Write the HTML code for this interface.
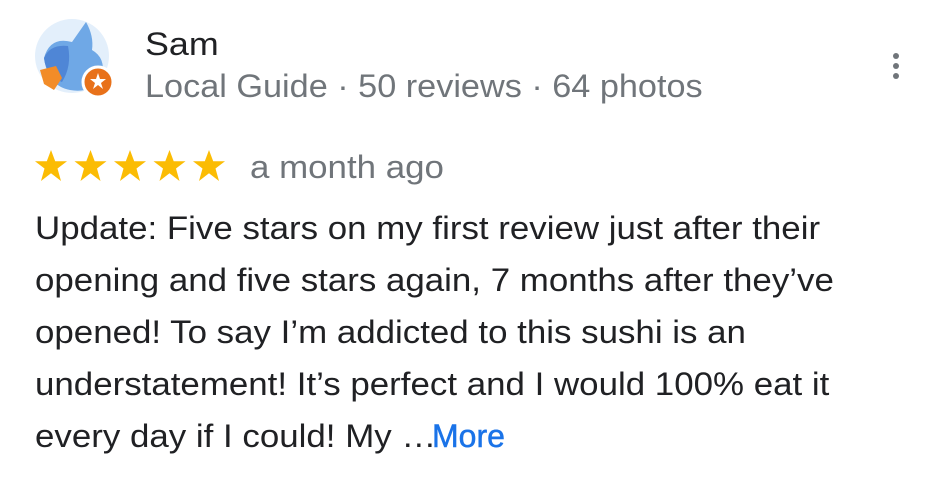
<!DOCTYPE html>
<html><head><meta charset="utf-8"><style>
body{margin:0;width:946px;height:485px;background:#fff;font-family:"Liberation Sans",Arial,sans-serif;position:relative;overflow:hidden}
.a{position:absolute;white-space:nowrap;transform-origin:0 50%}
.t{font-size:32px;color:#202124;line-height:52px;transform:scaleX(1.09);transform-origin:0 0}
</style></head><body>
<svg class="a" style="left:32px;top:16px" width="84" height="84" viewBox="0 0 84 84">
<circle cx="40" cy="40" r="37" fill="#e3effb"/>
<path d="M12 42 Q18 20 40 26 L54 6 Q62 20 60 34 Q74 42 70 60 Q60 78 38 74 Q16 70 12 42Z" fill="#6fa8e6"/>
<path d="M12 42 Q18 28 36 30 Q40 50 30 66 Q14 60 12 42Z" fill="#4f86d6"/>
<path d="M8 54 L24 50 L30 62 L22 74 L12 68 Z" fill="#f28c28"/>
<circle cx="66" cy="66" r="15" fill="#e8711a" stroke="#fff" stroke-width="3"/>
<path d="M66 57 L68 63 L74 63 L69 67 L71 73 L66 69 L61 73 L63 67 L58 63 L64 63Z" fill="#fff"/>
</svg>
<div class="a" style="left:145px;top:26px;font-size:32px;color:#202124;transform:scaleX(1.12)">Sam</div>
<div class="a" style="left:145px;top:68px;font-size:32px;color:#70757a;transform:scaleX(1.07)">Local Guide · 50 reviews · 64 photos</div>
<svg class="a" style="left:890px;top:52px" width="12" height="30"><circle cx="6" cy="4" r="3" fill="#70757a"/><circle cx="6" cy="14" r="3" fill="#70757a"/><circle cx="6" cy="24" r="3" fill="#70757a"/></svg>
<svg class="a" style="left:34px;top:149px" width="200" height="36" viewBox="0 0 200 36">
<g fill="#fbbc04">
<path id="s" d="M17 1 L21.2 12.3 L33 12.3 L23.5 19.5 L27 32 L17 24.3 L7 32 L10.5 19.5 L1 12.3 L12.8 12.3Z"/>
<use href="#s" x="39.5"/><use href="#s" x="79"/><use href="#s" x="118.5"/><use href="#s" x="158"/>
</g></svg>
<div class="a" style="left:250px;top:149px;font-size:32px;color:#70757a;transform:scaleX(1.09)">a month ago</div>
<div class="a t" style="left:35px;top:202px">Update: Five stars on my first review just after their<br>opening and five stars again, 7 months after they’ve<br>opened! To say I’m addicted to this sushi is an<br>understatement! It’s perfect and I would 100% eat it<br>every day if I could! My <span style="letter-spacing:-5px">…</span></div>
<div class="a" style="left:432px;top:410px;font-size:32px;line-height:52px;color:#1a73e8;-webkit-text-stroke:0.5px #1a73e8">More</div>
</body></html>
